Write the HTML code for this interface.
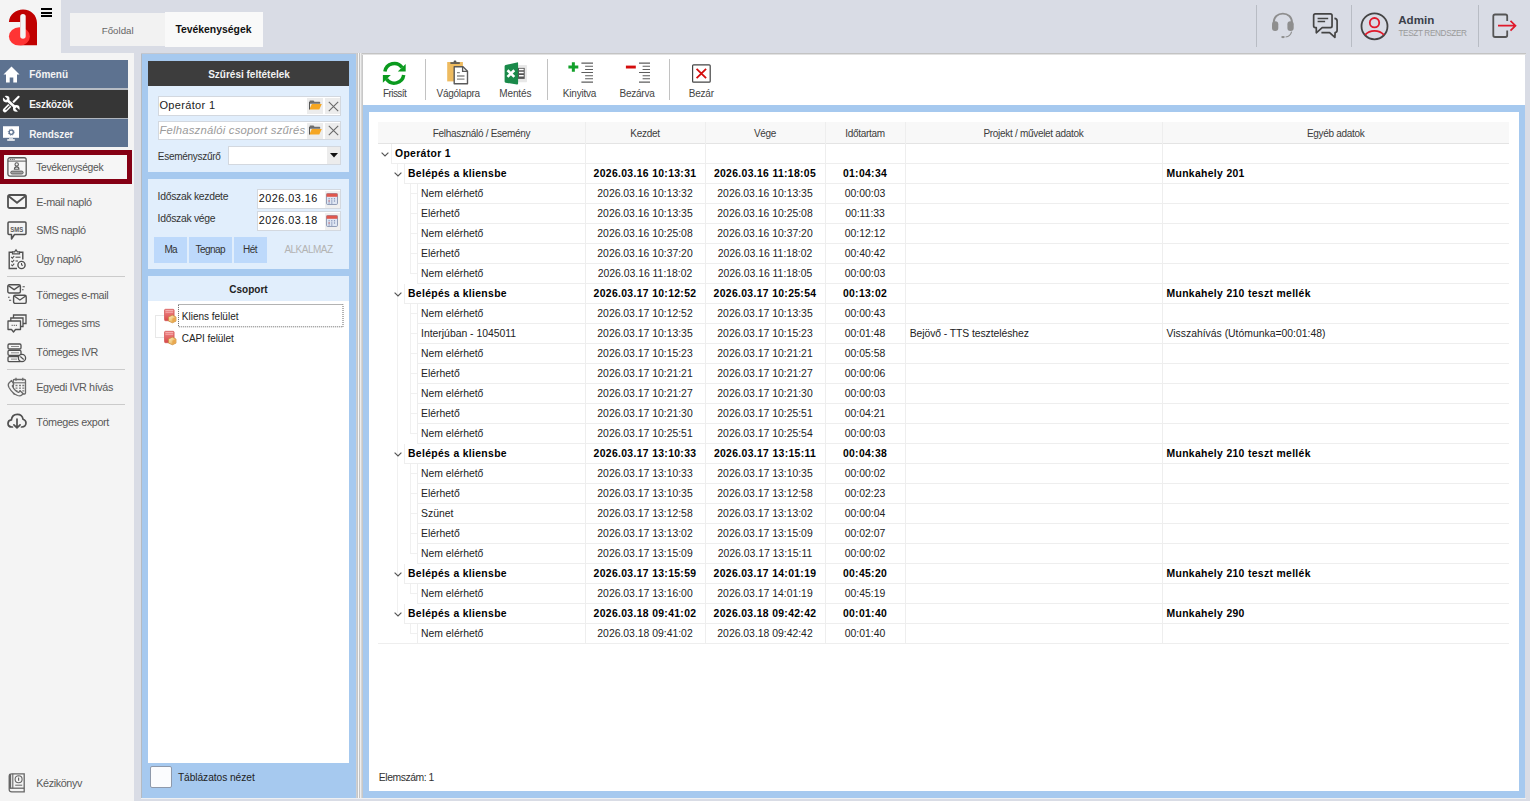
<!DOCTYPE html>
<html><head><meta charset="utf-8">
<style>
*{margin:0;padding:0;box-sizing:border-box}
html,body{width:1530px;height:801px;overflow:hidden}
body{position:relative;background:#d9dce5;font-family:"Liberation Sans",sans-serif;color:#222}
.a{position:absolute}
.t{position:absolute;white-space:nowrap;line-height:1}
svg.a{overflow:visible}
</style></head><body>
<div class="a" style="left:0px;top:0px;width:61px;height:53px;background:#f4f4f4;"></div>
<div class="a" style="left:0px;top:53px;width:134px;height:748px;background:#f4f4f4;"></div>
<div class="a" style="left:70px;top:13px;width:95px;height:33px;background:#f2f2f2;"></div>
<div class="a" style="left:165px;top:12px;width:98px;height:35px;background:#f9f9f9;"></div>
<div class="t" style="left:101.8px;top:26.00px;font-size:9.7px;color:#666;">Főoldal</div>
<div class="t" style="left:175.4px;top:25.00px;font-size:10.4px;font-weight:bold;color:#111;">Tevékenységek</div>
<svg class="a" style="left:0px;top:0px" width="60" height="53" viewBox="0 0 60 53">
<path d="M8.9 22 C9.5 14.5 15.8 9.6 23 9.6 C31 9.6 37 15.5 37 23 L37 45.3 L20.2 45.3 L20.2 22 Z" fill="#c00000"/>
<ellipse cx="19.4" cy="36.4" rx="10.5" ry="9.2" fill="#ff3434"/>
<rect x="20.2" y="14" width="5.5" height="24.8" rx="2.75" fill="#f4f4f4"/>
</svg>
<div class="a" style="left:41px;top:8.4px;width:11px;height:1.9px;background:#000;"></div>
<div class="a" style="left:41px;top:11.8px;width:11px;height:1.9px;background:#000;"></div>
<div class="a" style="left:41px;top:15.1px;width:11px;height:1.9px;background:#000;"></div>
<div class="a" style="left:0px;top:60px;width:128px;height:28px;background:#5d7290;"></div>
<div class="a" style="left:0px;top:88px;width:128px;height:2px;background:#b6bcc4;"></div>
<div class="a" style="left:0px;top:90px;width:128px;height:28px;background:#363636;"></div>
<div class="a" style="left:0px;top:118px;width:128px;height:1px;background:#b0b6be;"></div>
<div class="a" style="left:0px;top:119px;width:128px;height:28px;background:#5d7290;"></div>
<div class="t" style="left:29.2px;top:70.00px;font-size:10px;font-weight:bold;color:#f4f4f4;">Főmenü</div>
<div class="t" style="left:29.2px;top:100.00px;font-size:10px;font-weight:bold;letter-spacing:-0.25px;color:#f4f4f4;">Eszközök</div>
<div class="t" style="left:29.2px;top:130.00px;font-size:10px;font-weight:bold;letter-spacing:-0.1px;color:#f4f4f4;">Rendszer</div>
<svg class="a" style="left:3px;top:66px" width="17" height="17" viewBox="0 0 17 17"><path d="M8.5 0.5 L16.5 8.5 L14 8.5 L14 16.5 L10.3 16.5 L10.3 11.5 L6.7 11.5 L6.7 16.5 L3 16.5 L3 8.5 L0.5 8.5 Z" fill="#fff"/></svg>
<svg class="a" style="left:0px;top:92px" width="24" height="24" viewBox="0 0 24 24">
<path d="M18.6 4.8 L13.2 10.2" stroke="#fff" stroke-width="2.1" stroke-linecap="round"/>
<path d="M10.4 12.8 L4.9 18.3" stroke="#fff" stroke-width="4.2" stroke-linecap="round"/>
<path d="M9.4 13.8 L5.9 17.3" stroke="#363636" stroke-width="1.1" stroke-linecap="round"/>
<path d="M6.3 7.2 L16.2 16.3" stroke="#363636" stroke-width="4.4"/>
<path d="M6.3 7.2 L16.2 16.3" stroke="#fff" stroke-width="2.6"/>
<circle cx="6.2" cy="7.1" r="3.3" fill="#fff"/>
<circle cx="16.3" cy="16.4" r="3.3" fill="#fff"/>
<path d="M6.6 7.5 L2.8 3.7" stroke="#363636" stroke-width="2.1"/>
<path d="M15.9 16 L19.7 19.8" stroke="#363636" stroke-width="2.1"/>
</svg>
<svg class="a" style="left:3px;top:126px" width="17" height="16" viewBox="0 0 17 16">
<rect x="0" y="0.25" width="16" height="11.55" fill="#fff"/>
<rect x="6" y="11.8" width="4" height="1.5" fill="#c9d1dc"/>
<rect x="4" y="13.2" width="8" height="1.6" rx="0.8" fill="#fff"/>
<circle cx="8.25" cy="6.2" r="2.1" fill="none" stroke="#5d7290" stroke-width="1.3"/>
<circle cx="8.25" cy="6.2" r="3" fill="none" stroke="#5d7290" stroke-width="0.9" stroke-dasharray="1.1 1.25"/>
</svg>
<div class="a" style="left:0px;top:150px;width:132px;height:34px;background:#850014;"></div>
<div class="a" style="left:4px;top:155px;width:123px;height:24px;background:#f6f6f6;"></div>
<svg class="a" style="left:7px;top:156.5px" width="20" height="20" viewBox="0 0 20 20">
<rect x="0.9" y="0.75" width="18.3" height="18.3" rx="2" fill="none" stroke="#5a5a5a" stroke-width="1.3"/>
<path d="M0.9 4.1 L19.2 4.1" stroke="#5a5a5a" stroke-width="1"/>
<circle cx="3.3" cy="2.4" r="0.55" fill="#555"/><circle cx="5.2" cy="2.4" r="0.55" fill="#555"/><circle cx="7.1" cy="2.4" r="0.55" fill="#555"/>
<circle cx="9.7" cy="7.4" r="1.7" fill="none" stroke="#5a5a5a" stroke-width="1.1"/>
<path d="M7.4 12.2 C7.5 10.5 8.4 9.9 9.7 9.9 C11 9.9 11.9 10.5 12 12.2 Z" fill="none" stroke="#5a5a5a" stroke-width="1.1"/>
<rect x="3.7" y="14.1" width="12.5" height="2.9" rx="1.4" fill="#a0a0a0" stroke="#5a5a5a" stroke-width="0.9"/>
</svg>
<div class="t" style="left:36.2px;top:163.00px;font-size:10.3px;letter-spacing:-0.3px;color:#555;">Tevékenységek</div>
<div class="t" style="left:36.2px;top:197.00px;font-size:10.8px;letter-spacing:-0.38px;color:#595959;">E-mail napló</div>
<div class="t" style="left:36.2px;top:225.00px;font-size:10.8px;letter-spacing:-0.38px;color:#595959;">SMS napló</div>
<div class="t" style="left:36.2px;top:254.00px;font-size:10.8px;letter-spacing:-0.38px;color:#595959;">Ügy napló</div>
<div class="t" style="left:36.2px;top:290.00px;font-size:10.8px;letter-spacing:-0.38px;color:#595959;">Tömeges e-mail</div>
<div class="t" style="left:36.2px;top:318.00px;font-size:10.8px;letter-spacing:-0.38px;color:#595959;">Tömeges sms</div>
<div class="t" style="left:36.2px;top:347.00px;font-size:10.8px;letter-spacing:-0.38px;color:#595959;">Tömeges IVR</div>
<div class="t" style="left:36.2px;top:382.00px;font-size:10.8px;letter-spacing:-0.38px;color:#595959;">Egyedi IVR hívás</div>
<div class="t" style="left:36.2px;top:417.00px;font-size:10.8px;letter-spacing:-0.38px;color:#595959;">Tömeges export</div>
<div class="t" style="left:36.2px;top:778.00px;font-size:10.8px;letter-spacing:-0.38px;color:#595959;">Kézikönyv</div>
<div class="a" style="left:6.5px;top:275.6px;width:118px;height:1.3px;background:#cbcbcb;"></div>
<div class="a" style="left:6.5px;top:368.6px;width:118px;height:1.3px;background:#cbcbcb;"></div>
<div class="a" style="left:6.5px;top:404px;width:118px;height:1.3px;background:#cbcbcb;"></div>
<svg class="a" style="left:7px;top:194px" width="20" height="15" viewBox="0 0 20 15"><rect x="1" y="1" width="18" height="13" rx="1.6" fill="none" stroke="#505050" stroke-width="1.8"/><path d="M1.5 2 L10 8.8 L18.5 2" fill="none" stroke="#505050" stroke-width="1.8"/></svg>
<svg class="a" style="left:7px;top:220.5px" width="20" height="20" viewBox="0 0 20 20"><path d="M2 1 L18 1 Q19 1 19 2 L19 12.5 Q19 13.5 18 13.5 L7.5 13.5 L4.5 18 L4.5 13.5 L2 13.5 Q1 13.5 1 12.5 L1 2 Q1 1 2 1 Z" fill="none" stroke="#505050" stroke-width="1.5" stroke-linejoin="round"/><text x="3.2" y="10.5" font-family="Liberation Sans" font-weight="bold" font-size="7.3" textLength="13" lengthAdjust="spacingAndGlyphs" fill="#5a5a5a">SMS</text></svg>
<svg class="a" style="left:8px;top:249px" width="18" height="21" viewBox="0 0 18 21"><path d="M4.5 3.2 L1.2 3.2 L1.2 19.5 L9 19.5" fill="none" stroke="#505050" stroke-width="1.4"/>
<path d="M11.5 3.2 L14.8 3.2 L14.8 10.5" fill="none" stroke="#505050" stroke-width="1.4"/>
<path d="M4.5 4.8 L4.5 2.8 L6.6 2.8 L8 0.8 L9.4 2.8 L11.5 2.8 L11.5 4.8 Z" fill="none" stroke="#505050" stroke-width="1.2"/>
<path d="M3.2 8 L4.4 9.2 L6.2 7" fill="none" stroke="#505050" stroke-width="1.1"/><path d="M7.5 8.2 L12.5 8.2" stroke="#505050" stroke-width="1.1"/>
<path d="M3.2 11.8 L4.4 13 L6.2 10.8" fill="none" stroke="#505050" stroke-width="1.1"/><path d="M7.5 12 L10 12" stroke="#505050" stroke-width="1.1"/>
<path d="M3.2 15.6 L4.4 16.8 L6.2 14.6" fill="none" stroke="#505050" stroke-width="1.1"/>
<circle cx="13.5" cy="16" r="3.6" fill="#f4f4f4" stroke="#505050" stroke-width="1.4"/><path d="M13.5 14 L13.5 16.2 L15 16.2" fill="none" stroke="#505050" stroke-width="1"/></svg>
<svg class="a" style="left:7px;top:284px" width="20" height="20" viewBox="0 0 20 20"><rect x="0.8" y="0.8" width="12.6" height="8.2" rx="1.5" fill="none" stroke="#505050" stroke-width="1.4"/><path d="M1.3 1.6 L7.1 5.6 L12.9 1.6" fill="none" stroke="#505050" stroke-width="1.3"/>
<rect x="6.6" y="11.2" width="12.6" height="8.2" rx="1.5" fill="none" stroke="#505050" stroke-width="1.4"/><path d="M7.1 12 L12.9 16 L18.7 12" fill="none" stroke="#505050" stroke-width="1.3"/>
<path d="M15.6 2.8 L17.8 2.8 M15 5.8 L16.6 5.8 M1 13.2 L2.6 13.2 M2 16.2 L4.2 16.2" stroke="#505050" stroke-width="1.1"/></svg>
<svg class="a" style="left:7px;top:313.5px" width="20" height="20" viewBox="0 0 20 20"><path d="M6.5 4 L6.5 1 L19 1 L19 9.5 L16 9.5" fill="none" stroke="#505050" stroke-width="1.3"/>
<path d="M3.8 7 L3.8 4 L16 4 L16 12.5 L13.5 12.5" fill="#f4f4f4" stroke="#505050" stroke-width="1.3"/>
<path d="M1 7 L13.5 7 L13.5 15.5 L8.5 15.5 L6.5 18 L4.5 15.5 L1 15.5 Z" fill="#f4f4f4" stroke="#505050" stroke-width="1.3" stroke-linejoin="round"/>
<path d="M4.6 11.3 L5.8 11.3 M6.7 11.3 L7.9 11.3 M8.8 11.3 L10 11.3" stroke="#505050" stroke-width="1"/></svg>
<svg class="a" style="left:7px;top:342.5px" width="20" height="20" viewBox="0 0 20 20"><rect x="1" y="1" width="13" height="5" rx="1.2" fill="none" stroke="#505050" stroke-width="1.3"/>
<rect x="1" y="7.3" width="13" height="5" rx="1.2" fill="none" stroke="#505050" stroke-width="1.3"/>
<rect x="1" y="13.6" width="13" height="5" rx="1.2" fill="none" stroke="#505050" stroke-width="1.3"/>
<path d="M4 3.5 L12 3.5 M4 9.8 L12 9.8 M4 16.1 L10 16.1" stroke="#8a8a8a" stroke-width="1"/>
<circle cx="15" cy="15" r="3.6" fill="#f4f4f4" stroke="#505050" stroke-width="1.3"/><path d="M13.3 13.5 L16.7 16.5" stroke="#505050" stroke-width="1.2"/></svg>
<svg class="a" style="left:7px;top:376.5px" width="20" height="20" viewBox="0 0 20 20"><rect x="6.3" y="2.5" width="12.2" height="14.5" rx="1" fill="#f4f4f4" stroke="#6a6a6a" stroke-width="1.3"/>
<path d="M6.3 5.8 L18.5 5.8" stroke="#6a6a6a" stroke-width="1.1"/>
<path d="M9 0.8 L9 3.8 M15.8 0.8 L15.8 3.8" stroke="#6a6a6a" stroke-width="1.3"/>
<path d="M8.5 8.5 h2 M12 8.5 h2 M15.3 8.5 h2 M8.5 11.2 h2 M12 11.2 h2 M15.3 11.2 h2 M8.5 13.9 h2 M12 13.9 h2 M15.3 13.9 h2" stroke="#7a7a7a" stroke-width="1.3"/>
<path d="M4.5 3.5 L2 6 C1 7 1 8.5 2 10.5 C4 14 7 17 10.5 18.5 C12.5 19.3 13.8 19 14.8 18 L16 16.5 L13.3 14 L11.5 15.4 C9 14.4 6.5 11.5 5.3 9 L6.8 7.2 Z" fill="#f4f4f4" stroke="#6a6a6a" stroke-width="1.3" stroke-linejoin="round"/></svg>
<svg class="a" style="left:7px;top:411px" width="20" height="19" viewBox="0 0 20 19"><path d="M5.5 16 L4.8 16 C2.5 16 1 14.4 1 12.4 C1 10.4 2.5 9 4.4 8.8 C4.8 5.6 7.2 3.3 10.3 3.3 C13.4 3.3 15.6 5.4 16 8.2 C17.8 8.7 19 10.2 19 12.1 C19 14.3 17.3 16 15 16 L14.5 16" fill="none" stroke="#505050" stroke-width="1.7" stroke-linecap="round"/>
<path d="M10 8 L10 16.8 M6.9 13.8 L10 16.8 L13.1 13.8" fill="none" stroke="#505050" stroke-width="1.7" stroke-linecap="round" stroke-linejoin="round"/></svg>
<svg class="a" style="left:8px;top:772.5px" width="18" height="20" viewBox="0 0 18 20"><path d="M2.5 15.5 L2.5 2 Q2.5 0.8 3.7 0.8 L16.2 0.8 L16.2 18.8 L3.8 18.8 Q1.2 18.8 1.2 16.6 L1.2 3 Q1.2 1.2 2.5 0.9" fill="none" stroke="#666" stroke-width="1.3"/>
<path d="M1.5 15.2 L16.2 15.2" stroke="#666" stroke-width="1.3"/>
<path d="M4.8 0.8 L4.8 15.2" stroke="#666" stroke-width="1.1"/>
<circle cx="10.6" cy="6.2" r="3.5" fill="none" stroke="#666" stroke-width="1.1"/>
<path d="M10.6 4.8 L10.6 7.8" stroke="#666" stroke-width="1.2"/><circle cx="10.6" cy="4" r="0.4" fill="#666"/>
<path d="M7.2 12.2 L14.2 12.2" stroke="#666" stroke-width="1"/></svg>
<div class="a" style="left:1256px;top:5px;width:1px;height:42px;background:#b8bcc4;"></div>
<div class="a" style="left:1351px;top:5px;width:1px;height:42px;background:#b8bcc4;"></div>
<div class="a" style="left:1478px;top:5px;width:1px;height:42px;background:#b8bcc4;"></div>
<svg class="a" style="left:1271px;top:12px" width="24" height="27" viewBox="0 0 24 27"><path d="M2.7 10.5 C2.7 5 6.7 1.6 11.85 1.6 C17 1.6 21 5 21 10.5" fill="none" stroke="#8e8e8e" stroke-width="1.8"/>
<rect x="1" y="9.3" width="6.3" height="9.7" rx="3" fill="#8e8e8e"/><rect x="16.4" y="9.3" width="6.3" height="9.7" rx="3" fill="#8e8e8e"/>
<path d="M20.6 19.6 C19.9 22.6 18 24.6 14.6 25" fill="none" stroke="#8e8e8e" stroke-width="1.1"/><ellipse cx="12" cy="25.1" rx="1.8" ry="1.05" fill="#8e8e8e"/></svg>
<svg class="a" style="left:1312px;top:12px" width="27" height="28" viewBox="0 0 27 28"><path d="M3.3 1.85 L18.4 1.85 Q20.05 1.85 20.05 3.5 L20.05 13.9 Q20.05 15.55 18.4 15.55 L10.2 15.55 L4.3 20.8 L4.3 15.55 L3.3 15.55 Q1.65 15.55 1.65 13.9 L1.65 3.5 Q1.65 1.85 3.3 1.85 Z" fill="none" stroke="#444" stroke-width="1.7" stroke-linejoin="round"/>
<path d="M5.6 6.6 L16.2 6.6 M5.6 9.6 L13.1 9.6" stroke="#444" stroke-width="1.5"/>
<path d="M22.4 6.4 Q25.1 6.6 25.1 9 L25.1 18.3 Q25.1 20.3 23.1 20.6 L22.9 25.4 L17.6 20.6 L9.4 20.6" fill="none" stroke="#444" stroke-width="1.7" stroke-linejoin="round"/></svg>
<svg class="a" style="left:1360px;top:11.5px" width="29" height="29" viewBox="0 0 29 29"><circle cx="14.5" cy="14.3" r="13" fill="none" stroke="#444" stroke-width="1.8"/>
<circle cx="14.5" cy="10.7" r="4.7" fill="none" stroke="#e0192a" stroke-width="1.8"/>
<path d="M5.1 22.9 C7.8 19.9 11 18.9 14.5 18.9 C18 18.9 21.2 19.9 23.9 22.9" fill="none" stroke="#e0192a" stroke-width="1.8"/></svg>
<div class="t" style="left:1398.2px;top:14.00px;font-size:11.6px;font-weight:bold;color:#3b3f4a;">Admin</div>
<div class="t" style="left:1398.4px;top:30.00px;font-size:8.2px;letter-spacing:-0.35px;color:#9a9a9a;">TESZT RENDSZER</div>
<svg class="a" style="left:1491px;top:13px" width="27" height="26" viewBox="0 0 27 26"><path d="M16.2 8 L16.2 3.2 Q16.2 1.5 14.5 1.5 L4 1.5 Q2.3 1.5 2.3 3.2 L2.3 22.3 Q2.3 24 4 24 L14.5 24 Q16.2 24 16.2 22.3 L16.2 17.5" fill="none" stroke="#555" stroke-width="1.8"/>
<path d="M7 12.7 L24.5 12.7 M19.5 7.8 L24.5 12.7 L19.5 17.6" fill="none" stroke="#e0192a" stroke-width="1.7"/></svg>
<div class="a" style="left:141px;top:53px;width:215px;height:745px;background:#a6c9ef;"></div>
<div class="a" style="left:141px;top:53px;width:1px;height:745px;background:#b4bac2;"></div>
<div class="a" style="left:141px;top:53px;width:215px;height:1px;background:#c3c7cf;"></div>
<div class="a" style="left:148px;top:61px;width:201px;height:25px;background:#3d3d3d;"></div>
<div class="t" style="left:208.2px;top:70.00px;font-size:10px;font-weight:bold;color:#f2f2f2;">Szűrési feltételek</div>
<div class="a" style="left:148px;top:86px;width:201px;height:86px;background:#e1eefc;"></div>
<div class="a" style="left:157.5px;top:96.3px;width:183px;height:19.3px;background:#fff;border:1px solid #d3d8df"></div>
<div class="a" style="left:307px;top:98px;width:16px;height:16px;background:#ececec;"></div>
<div class="a" style="left:325px;top:98px;width:15px;height:16px;background:#ececec;"></div>
<div class="t" style="left:159.4px;top:100.00px;font-size:11px;letter-spacing:0.35px;color:#222;">Operátor 1</div>
<div class="a" style="left:157.5px;top:120.9px;width:183px;height:19.6px;background:#fff;border:1px solid #d3d8df"></div>
<div class="a" style="left:307px;top:122.8px;width:16px;height:16px;background:#ececec;"></div>
<div class="a" style="left:325px;top:122.8px;width:15px;height:16px;background:#ececec;"></div>
<div class="t" style="left:159.4px;top:125.00px;font-size:11.3px;font-style:italic;letter-spacing:0.22px;color:#9b9b9b;">Felhasználói csoport szűrés</div>
<svg class="a" style="left:309px;top:100.3px" width="13" height="10" viewBox="0 0 13 10"><path d="M0.5 1.2 Q0.5 0.5 1.2 0.5 L4.5 0.5 L5.5 1.8 L10.5 1.8 Q11.2 1.8 11.2 2.5 L11.2 3.8 L0.5 3.8 Z" fill="#6e6e6e"/>
<path d="M0.5 3 L0.5 9.5 L10.3 9.5 L12.8 4 L2.8 4 L0.8 8.6" fill="#f5a623"/>
<path d="M0.5 2 L0.5 9.5" stroke="#555" stroke-width="1"/></svg>
<svg class="a" style="left:327.5px;top:100.5px" width="11" height="11" viewBox="0 0 11 11"><path d="M0.8 0.8 L10.2 10.2 M10.2 0.8 L0.8 10.2" stroke="#6a6a6a" stroke-width="1.1"/></svg>
<svg class="a" style="left:309px;top:124.8px" width="13" height="10" viewBox="0 0 13 10"><path d="M0.5 1.2 Q0.5 0.5 1.2 0.5 L4.5 0.5 L5.5 1.8 L10.5 1.8 Q11.2 1.8 11.2 2.5 L11.2 3.8 L0.5 3.8 Z" fill="#6e6e6e"/>
<path d="M0.5 3 L0.5 9.5 L10.3 9.5 L12.8 4 L2.8 4 L0.8 8.6" fill="#f5a623"/>
<path d="M0.5 2 L0.5 9.5" stroke="#555" stroke-width="1"/></svg>
<svg class="a" style="left:327.5px;top:125px" width="11" height="11" viewBox="0 0 11 11"><path d="M0.8 0.8 L10.2 10.2 M10.2 0.8 L0.8 10.2" stroke="#6a6a6a" stroke-width="1.1"/></svg>
<div class="t" style="left:157.8px;top:152.00px;font-size:10px;letter-spacing:-0.28px;color:#333;">Eseményszűrő</div>
<div class="a" style="left:228.2px;top:145.7px;width:112.4px;height:19.6px;background:#fff;border:1px solid #d3d8df"></div>
<div class="a" style="left:327px;top:147px;width:13px;height:17px;background:#ececec;"></div>
<svg class="a" style="left:329.5px;top:153px" width="8" height="5" viewBox="0 0 8 5"><path d="M0 0 L8 0 L4 4.6 Z" fill="#111"/></svg>
<div class="a" style="left:148px;top:179px;width:201px;height:90px;background:#e1eefc;"></div>
<div class="t" style="left:157.6px;top:192.00px;font-size:10.4px;letter-spacing:-0.3px;color:#333;">Időszak kezdete</div>
<div class="t" style="left:157.6px;top:214.00px;font-size:10.4px;letter-spacing:-0.3px;color:#333;">Időszak vége</div>
<div class="a" style="left:256.8px;top:189.4px;width:83.8px;height:19.6px;background:#fff;border:1px solid #d3d8df"></div>
<div class="a" style="left:256.8px;top:211.4px;width:83.8px;height:19.4px;background:#fff;border:1px solid #d3d8df"></div>
<div class="a" style="left:325.2px;top:190.5px;width:14.5px;height:17.5px;background:#f0f0f0;"></div>
<div class="a" style="left:325.2px;top:212.5px;width:14.5px;height:17.2px;background:#f0f0f0;"></div>
<div class="t" style="left:258.8px;top:193.00px;font-size:10.8px;letter-spacing:0.5px;color:#111;">2026.03.16</div>
<div class="t" style="left:258.8px;top:215.00px;font-size:10.8px;letter-spacing:0.5px;color:#111;">2026.03.18</div>
<svg class="a" style="left:325.8px;top:193px" width="12" height="12" viewBox="0 0 12 12"><rect x="0.5" y="0.5" width="11" height="11" rx="1.2" fill="#dfe6f3" stroke="#7b8aa8" stroke-width="0.8"/>
<rect x="0.5" y="0.5" width="11" height="3.3" fill="#e0574c"/>
<path d="M2.5 5.8 h1.2 M5.2 5.8 h1.2 M7.9 5.8 h1.2 M2.5 8 h1.2 M5.2 8 h1.2 M7.9 8 h1.2 M2.5 10 h1.2 M5.2 10 h1.2" stroke="#6b7fa8" stroke-width="1"/>
<path d="M2.5 8 h1.2" stroke="#e0574c" stroke-width="1"/></svg>
<svg class="a" style="left:325.8px;top:215px" width="12" height="12" viewBox="0 0 12 12"><rect x="0.5" y="0.5" width="11" height="11" rx="1.2" fill="#dfe6f3" stroke="#7b8aa8" stroke-width="0.8"/>
<rect x="0.5" y="0.5" width="11" height="3.3" fill="#e0574c"/>
<path d="M2.5 5.8 h1.2 M5.2 5.8 h1.2 M7.9 5.8 h1.2 M2.5 8 h1.2 M5.2 8 h1.2 M7.9 8 h1.2 M2.5 10 h1.2 M5.2 10 h1.2" stroke="#6b7fa8" stroke-width="1"/>
<path d="M2.5 8 h1.2" stroke="#e0574c" stroke-width="1"/></svg>
<div class="a" style="left:154.3px;top:236.6px;width:32.7px;height:26px;background:#bdd9fb;"></div>
<div class="a" style="left:189px;top:236.6px;width:43px;height:26px;background:#bdd9fb;"></div>
<div class="a" style="left:233.7px;top:236.6px;width:33.3px;height:26px;background:#bdd9fb;"></div>
<div class="t" style="left:150.60px;width:40px;text-align:center;top:245.00px;font-size:10px;letter-spacing:-0.8px;color:#333;">Ma</div>
<div class="t" style="left:185.30px;width:50px;text-align:center;top:245.00px;font-size:10px;letter-spacing:-0.55px;color:#333;">Tegnap</div>
<div class="t" style="left:230.00px;width:40px;text-align:center;top:245.00px;font-size:10px;letter-spacing:-0.5px;color:#333;">Hét</div>
<div class="t" style="left:273.50px;width:70px;text-align:center;top:245.00px;font-size:10px;letter-spacing:-0.5px;color:#b3b3b3;">ALKALMAZ</div>
<div class="a" style="left:148px;top:276px;width:201px;height:25.4px;background:#e1eefc;"></div>
<div class="a" style="left:148px;top:301.4px;width:201px;height:461.3px;background:#fff;"></div>
<div class="t" style="left:208.50px;width:80px;text-align:center;top:285.00px;font-size:10px;font-weight:bold;color:#222;">Csoport</div>
<svg class="a" style="left:178px;top:304px" width="166" height="24" viewBox="0 0 166 24"><rect x="0.5" y="0.5" width="164.5" height="22.3" fill="none" stroke="#666" stroke-width="1" stroke-dasharray="1 1"/></svg>
<div class="a" style="left:155px;top:315px;width:1px;height:22.5px;background:#e8e8e8;"></div>
<div class="a" style="left:155px;top:315px;width:9px;height:1px;background:#e8e8e8;"></div>
<div class="a" style="left:155px;top:337px;width:9px;height:1px;background:#e8e8e8;"></div>
<svg class="a" style="left:164.2px;top:308.8px" width="13" height="14" viewBox="0 0 13 14"><defs><linearGradient id="rg" x1="0" y1="0" x2="0" y2="1"><stop offset="0" stop-color="#f08a8a"/><stop offset="1" stop-color="#d84848"/></linearGradient>
<linearGradient id="cg" x1="0" y1="0" x2="1" y2="1"><stop offset="0" stop-color="#fff4c8"/><stop offset="1" stop-color="#e09a30"/></linearGradient></defs>
<rect x="0.5" y="0.3" width="9.6" height="11.4" rx="1" fill="url(#rg)" stroke="#d05050" stroke-width="0.7"/>
<path d="M1.5 1.5 h7.6 M1.5 3.3 h7.6" stroke="#f8c0c0" stroke-width="0.7"/>
<path d="M4.6 8 L8.4 6.2 L12 8 L12 12.1 L8.4 13.8 L4.6 12.1 Z" fill="url(#cg)" stroke="#c88a38" stroke-width="0.7"/>
<path d="M8.4 9.8 L12 8 L12 12.1 L8.4 13.8 Z" fill="#e8a850"/></svg>
<svg class="a" style="left:164.2px;top:331.4px" width="13" height="14" viewBox="0 0 13 14"><defs><linearGradient id="rg" x1="0" y1="0" x2="0" y2="1"><stop offset="0" stop-color="#f08a8a"/><stop offset="1" stop-color="#d84848"/></linearGradient>
<linearGradient id="cg" x1="0" y1="0" x2="1" y2="1"><stop offset="0" stop-color="#fff4c8"/><stop offset="1" stop-color="#e09a30"/></linearGradient></defs>
<rect x="0.5" y="0.3" width="9.6" height="11.4" rx="1" fill="url(#rg)" stroke="#d05050" stroke-width="0.7"/>
<path d="M1.5 1.5 h7.6 M1.5 3.3 h7.6" stroke="#f8c0c0" stroke-width="0.7"/>
<path d="M4.6 8 L8.4 6.2 L12 8 L12 12.1 L8.4 13.8 L4.6 12.1 Z" fill="url(#cg)" stroke="#c88a38" stroke-width="0.7"/>
<path d="M8.4 9.8 L12 8 L12 12.1 L8.4 13.8 Z" fill="#e8a850"/></svg>
<div class="t" style="left:181.8px;top:312.00px;font-size:10px;color:#222;">Kliens felület</div>
<div class="t" style="left:181.8px;top:334.00px;font-size:10px;letter-spacing:-0.08px;color:#222;">CAPI felület</div>
<div class="a" style="left:149.6px;top:766.3px;width:22px;height:21.7px;background:#fbfcfe;border:1px solid #8e99ab;border-radius:2px"></div>
<div class="t" style="left:177.9px;top:773.00px;font-size:10.2px;letter-spacing:-0.05px;color:#222;">Táblázatos nézet</div>
<div class="a" style="left:356px;top:53px;width:1px;height:745px;background:#d0d0d0;"></div>
<div class="a" style="left:357px;top:53px;width:1px;height:745px;background:#c6c6c6;"></div>
<div class="a" style="left:358px;top:53px;width:1px;height:745px;background:#f8f8f8;"></div>
<div class="a" style="left:359px;top:53px;width:1px;height:745px;background:#c4c4c4;"></div>
<div class="a" style="left:360px;top:53px;width:1px;height:745px;background:#eeeeee;"></div>
<div class="a" style="left:361px;top:53px;width:1px;height:745px;background:#d6d6d6;"></div>
<div class="a" style="left:362px;top:53px;width:1px;height:745px;background:#c8c8c8;"></div>
<div class="a" style="left:363px;top:53px;width:1162px;height:745px;background:#fff;"></div>
<div class="a" style="left:362px;top:53px;width:1164px;height:1px;background:#c3c3c3;"></div>
<div class="a" style="left:362px;top:54px;width:1164px;height:1px;background:#e2e2e2;"></div>
<div class="a" style="left:363px;top:105px;width:1162px;height:693px;background:#a6c9ef;"></div>
<div class="a" style="left:369px;top:112px;width:1150px;height:679px;background:#fff;"></div>
<div class="a" style="left:141px;top:798px;width:1385px;height:1px;background:#eef0f3;"></div>
<div class="a" style="left:425px;top:59px;width:1px;height:41px;background:#c2c2c2;"></div>
<div class="a" style="left:547px;top:59px;width:1px;height:41px;background:#c2c2c2;"></div>
<div class="a" style="left:669px;top:59px;width:1px;height:41px;background:#c2c2c2;"></div>
<div class="t" style="left:364.60px;width:60px;text-align:center;top:89.00px;font-size:10px;letter-spacing:-0.6px;color:#444;">Frissít</div>
<div class="t" style="left:418.20px;width:80px;text-align:center;top:89.00px;font-size:10px;letter-spacing:-0.25px;color:#444;">Vágólapra</div>
<div class="t" style="left:485.30px;width:60px;text-align:center;top:89.00px;font-size:10px;letter-spacing:-0.1px;color:#444;">Mentés</div>
<div class="t" style="left:549.50px;width:60px;text-align:center;top:89.00px;font-size:10px;letter-spacing:-0.2px;color:#444;">Kinyitva</div>
<div class="t" style="left:607.00px;width:60px;text-align:center;top:89.00px;font-size:10px;letter-spacing:-0.25px;color:#444;">Bezárva</div>
<div class="t" style="left:671.30px;width:60px;text-align:center;top:89.00px;font-size:10px;letter-spacing:-0.2px;color:#444;">Bezár</div>
<svg class="a" style="left:378px;top:58px" width="32" height="32" viewBox="0 0 32 32"><path d="M6.9 13.6 A9.5 9.5 0 0 1 24.1 9.55" fill="none" stroke="#0a9a1e" stroke-width="3.5"/>
<path d="M27.7 6 L27.7 13.6 L19.8 13.6 Z" fill="#0a9a1e"/>
<path d="M25.7 17 A9.5 9.5 0 0 1 8.5 21.05" fill="none" stroke="#0a9a1e" stroke-width="3.5"/>
<path d="M4.9 24.8 L4.9 17 L12.8 17 Z" fill="#0a9a1e"/></svg>
<svg class="a" style="left:440px;top:56px" width="96" height="32" viewBox="0 0 96 32"><rect x="7.2" y="6" width="15.7" height="19.4" fill="#eebb60"/>
<rect x="10.4" y="6.2" width="9.4" height="1.7" fill="#555"/>
<rect x="13.6" y="4.6" width="2.8" height="2" rx="1" fill="#555"/>
<path d="M14.2 10.7 L23 10.7 L27.5 15.2 L27.5 27.8 L14.2 27.8 Z" fill="#fff" stroke="#5a5a5a" stroke-width="1.4" stroke-linejoin="round"/>
<path d="M22.6 10.7 L22.6 15.3 L27.5 15.3" fill="none" stroke="#5a5a5a" stroke-width="1.3"/>
<path d="M17 16.7 h2.8 M17 20 h7.5 M17 23.2 h7.5" stroke="#8a8a8a" stroke-width="1.3"/>
<rect x="78" y="9" width="9" height="17.3" rx="0.8" fill="#e8e8e8"/>
<rect x="78" y="11.9" width="6.7" height="11" fill="#555"/>
<path d="M79 13.5 h4.7 M79 16.6 h4.7 M79 19.8 h4.7" stroke="#fff" stroke-width="1.5"/>
<path d="M65.6 9 Q64.6 9.2 64.6 10.2 L64.6 25.5 Q64.6 26.5 65.6 26.7 L77 28.5 Q78.1 28.6 78.1 27.5 L78.1 7.3 Q78.1 6.2 77 6.4 Z" fill="#1a8a4a"/>
<path d="M67.5 14.2 L74.3 20.9 M74.3 14.2 L67.5 20.9" stroke="#fff" stroke-width="2.6"/></svg>
<svg class="a" style="left:560px;top:56px" width="160" height="32" viewBox="0 0 160 32"><path d="M13.35 6.3 L13.35 15.7 M8.4 11 L18.3 11" stroke="#12a02a" stroke-width="3"/>
<path d="M21.4 7.1 L33 7.1 M25.1 10.2 L33 10.2 M25.1 13.4 L33 13.4 M21.4 16.5 L33 16.5 M25.1 19.7 L33 19.7 M25.1 22.8 L33 22.8 M21.4 26.1 L33 26.1 " stroke="#5e5e5e" stroke-width="1.05"/>
<path d="M65.9 11.05 L75.8 11.05" stroke="#d40c0c" stroke-width="2.9"/>
<path d="M79 7.1 L90 7.1 M82.6 10.2 L90 10.2 M82.6 13.4 L90 13.4 M79 16.5 L90 16.5 M82.6 19.7 L90 19.7 M82.6 22.8 L90 22.8 M79 26.1 L90 26.1 " stroke="#5e5e5e" stroke-width="1.05"/>
<rect x="132.6" y="8.8" width="17.6" height="17.4" rx="1" fill="#fff" stroke="#444" stroke-width="1.2"/>
<path d="M136.6 12.9 L146.1 22.2 M146.1 12.9 L136.6 22.2" stroke="#d40c0c" stroke-width="1.8"/></svg>
<div class="a" style="left:378px;top:122px;width:1131px;height:21px;background:#f8f8f8;"></div>
<div class="a" style="left:378px;top:143px;width:1131px;height:1px;background:#e4e4e4;"></div>
<div class="a" style="left:585px;top:122px;width:1px;height:521px;background:#eeeeee;"></div>
<div class="a" style="left:705px;top:122px;width:1px;height:521px;background:#eeeeee;"></div>
<div class="a" style="left:825px;top:122px;width:1px;height:521px;background:#eeeeee;"></div>
<div class="a" style="left:905px;top:122px;width:1px;height:521px;background:#eeeeee;"></div>
<div class="a" style="left:1162px;top:122px;width:1px;height:521px;background:#eeeeee;"></div>
<div class="t" style="left:378.00px;width:207px;text-align:center;top:129.00px;font-size:10px;letter-spacing:-0.3px;color:#3c3c3c;">Felhasználó / Esemény</div>
<div class="t" style="left:585.00px;width:120px;text-align:center;top:129.00px;font-size:10px;letter-spacing:-0.3px;color:#3c3c3c;">Kezdet</div>
<div class="t" style="left:705.00px;width:120px;text-align:center;top:129.00px;font-size:10px;letter-spacing:-0.3px;color:#3c3c3c;">Vége</div>
<div class="t" style="left:825.00px;width:80px;text-align:center;top:129.00px;font-size:10px;letter-spacing:-0.3px;color:#3c3c3c;">Időtartam</div>
<div class="t" style="left:905.00px;width:257px;text-align:center;top:129.00px;font-size:10px;letter-spacing:-0.3px;color:#3c3c3c;">Projekt / művelet adatok</div>
<div class="t" style="left:1162.00px;width:347.5px;text-align:center;top:129.00px;font-size:10px;letter-spacing:-0.3px;color:#3c3c3c;">Egyéb adatok</div>
<div class="a" style="left:397px;top:163px;width:1px;height:450px;background:#f0f0f0;"></div>
<div class="a" style="left:410px;top:183px;width:1px;height:90px;background:#f0f0f0;"></div>
<div class="a" style="left:410px;top:193px;width:7px;height:1px;background:#f0f0f0;"></div>
<div class="a" style="left:410px;top:213px;width:7px;height:1px;background:#f0f0f0;"></div>
<div class="a" style="left:410px;top:233px;width:7px;height:1px;background:#f0f0f0;"></div>
<div class="a" style="left:410px;top:253px;width:7px;height:1px;background:#f0f0f0;"></div>
<div class="a" style="left:410px;top:273px;width:7px;height:1px;background:#f0f0f0;"></div>
<div class="a" style="left:410px;top:303px;width:1px;height:130px;background:#f0f0f0;"></div>
<div class="a" style="left:410px;top:313px;width:7px;height:1px;background:#f0f0f0;"></div>
<div class="a" style="left:410px;top:333px;width:7px;height:1px;background:#f0f0f0;"></div>
<div class="a" style="left:410px;top:353px;width:7px;height:1px;background:#f0f0f0;"></div>
<div class="a" style="left:410px;top:373px;width:7px;height:1px;background:#f0f0f0;"></div>
<div class="a" style="left:410px;top:393px;width:7px;height:1px;background:#f0f0f0;"></div>
<div class="a" style="left:410px;top:413px;width:7px;height:1px;background:#f0f0f0;"></div>
<div class="a" style="left:410px;top:433px;width:7px;height:1px;background:#f0f0f0;"></div>
<div class="a" style="left:410px;top:463px;width:1px;height:90px;background:#f0f0f0;"></div>
<div class="a" style="left:410px;top:473px;width:7px;height:1px;background:#f0f0f0;"></div>
<div class="a" style="left:410px;top:493px;width:7px;height:1px;background:#f0f0f0;"></div>
<div class="a" style="left:410px;top:513px;width:7px;height:1px;background:#f0f0f0;"></div>
<div class="a" style="left:410px;top:533px;width:7px;height:1px;background:#f0f0f0;"></div>
<div class="a" style="left:410px;top:553px;width:7px;height:1px;background:#f0f0f0;"></div>
<div class="a" style="left:410px;top:583px;width:1px;height:10px;background:#f0f0f0;"></div>
<div class="a" style="left:410px;top:593px;width:7px;height:1px;background:#f0f0f0;"></div>
<div class="a" style="left:410px;top:623px;width:1px;height:10px;background:#f0f0f0;"></div>
<div class="a" style="left:410px;top:633px;width:7px;height:1px;background:#f0f0f0;"></div>
<div class="a" style="left:391px;top:163px;width:1118px;height:1px;background:#eeeeee;"></div>
<div class="a" style="left:391px;top:144px;width:1px;height:19px;background:#eeeeee;"></div>
<svg class="a" style="left:380.7px;top:151.5px" width="8" height="5" viewBox="0 0 8 5"><path d="M0.6 0.6 L4 3.9 L7.4 0.6" fill="none" stroke="#555" stroke-width="1.15"/></svg>
<div class="t" style="left:395px;top:149.00px;font-size:10.4px;font-weight:bold;letter-spacing:0.33px;color:#000;">Operátor 1</div>
<div class="a" style="left:404px;top:183px;width:1105px;height:1px;background:#eeeeee;"></div>
<div class="a" style="left:404px;top:164px;width:1px;height:19px;background:#eeeeee;"></div>
<svg class="a" style="left:393.7px;top:171.5px" width="8" height="5" viewBox="0 0 8 5"><path d="M0.6 0.6 L4 3.9 L7.4 0.6" fill="none" stroke="#555" stroke-width="1.15"/></svg>
<div class="t" style="left:408px;top:169.00px;font-size:10.4px;font-weight:bold;letter-spacing:0.33px;color:#000;">Belépés a kliensbe</div>
<div class="t" style="left:585.00px;width:120px;text-align:center;top:169.00px;font-size:10.4px;font-weight:bold;letter-spacing:0.33px;color:#000;">2026.03.16 10:13:31</div>
<div class="t" style="left:705.00px;width:120px;text-align:center;top:169.00px;font-size:10.4px;font-weight:bold;letter-spacing:0.33px;color:#000;">2026.03.16 11:18:05</div>
<div class="t" style="left:825.00px;width:80px;text-align:center;top:169.00px;font-size:10.4px;font-weight:bold;letter-spacing:0.33px;color:#000;">01:04:34</div>
<div class="t" style="left:1166.5px;top:169.00px;font-size:10.4px;font-weight:bold;letter-spacing:0.33px;color:#000;">Munkahely 201</div>
<div class="a" style="left:417px;top:203px;width:1092px;height:1px;background:#eeeeee;"></div>
<div class="a" style="left:417px;top:184px;width:1px;height:19px;background:#eeeeee;"></div>
<div class="t" style="left:421px;top:189.00px;font-size:10.4px;color:#222;">Nem elérhető</div>
<div class="t" style="left:585.00px;width:120px;text-align:center;top:189.00px;font-size:10.4px;color:#222;">2026.03.16 10:13:32</div>
<div class="t" style="left:705.00px;width:120px;text-align:center;top:189.00px;font-size:10.4px;color:#222;">2026.03.16 10:13:35</div>
<div class="t" style="left:825.00px;width:80px;text-align:center;top:189.00px;font-size:10.4px;color:#222;">00:00:03</div>
<div class="a" style="left:417px;top:223px;width:1092px;height:1px;background:#eeeeee;"></div>
<div class="a" style="left:417px;top:204px;width:1px;height:19px;background:#eeeeee;"></div>
<div class="t" style="left:421px;top:209.00px;font-size:10.4px;color:#222;">Elérhető</div>
<div class="t" style="left:585.00px;width:120px;text-align:center;top:209.00px;font-size:10.4px;color:#222;">2026.03.16 10:13:35</div>
<div class="t" style="left:705.00px;width:120px;text-align:center;top:209.00px;font-size:10.4px;color:#222;">2026.03.16 10:25:08</div>
<div class="t" style="left:825.00px;width:80px;text-align:center;top:209.00px;font-size:10.4px;color:#222;">00:11:33</div>
<div class="a" style="left:417px;top:243px;width:1092px;height:1px;background:#eeeeee;"></div>
<div class="a" style="left:417px;top:224px;width:1px;height:19px;background:#eeeeee;"></div>
<div class="t" style="left:421px;top:229.00px;font-size:10.4px;color:#222;">Nem elérhető</div>
<div class="t" style="left:585.00px;width:120px;text-align:center;top:229.00px;font-size:10.4px;color:#222;">2026.03.16 10:25:08</div>
<div class="t" style="left:705.00px;width:120px;text-align:center;top:229.00px;font-size:10.4px;color:#222;">2026.03.16 10:37:20</div>
<div class="t" style="left:825.00px;width:80px;text-align:center;top:229.00px;font-size:10.4px;color:#222;">00:12:12</div>
<div class="a" style="left:417px;top:263px;width:1092px;height:1px;background:#eeeeee;"></div>
<div class="a" style="left:417px;top:244px;width:1px;height:19px;background:#eeeeee;"></div>
<div class="t" style="left:421px;top:249.00px;font-size:10.4px;color:#222;">Elérhető</div>
<div class="t" style="left:585.00px;width:120px;text-align:center;top:249.00px;font-size:10.4px;color:#222;">2026.03.16 10:37:20</div>
<div class="t" style="left:705.00px;width:120px;text-align:center;top:249.00px;font-size:10.4px;color:#222;">2026.03.16 11:18:02</div>
<div class="t" style="left:825.00px;width:80px;text-align:center;top:249.00px;font-size:10.4px;color:#222;">00:40:42</div>
<div class="a" style="left:417px;top:283px;width:1092px;height:1px;background:#eeeeee;"></div>
<div class="a" style="left:417px;top:264px;width:1px;height:19px;background:#eeeeee;"></div>
<div class="t" style="left:421px;top:269.00px;font-size:10.4px;color:#222;">Nem elérhető</div>
<div class="t" style="left:585.00px;width:120px;text-align:center;top:269.00px;font-size:10.4px;color:#222;">2026.03.16 11:18:02</div>
<div class="t" style="left:705.00px;width:120px;text-align:center;top:269.00px;font-size:10.4px;color:#222;">2026.03.16 11:18:05</div>
<div class="t" style="left:825.00px;width:80px;text-align:center;top:269.00px;font-size:10.4px;color:#222;">00:00:03</div>
<div class="a" style="left:404px;top:303px;width:1105px;height:1px;background:#eeeeee;"></div>
<div class="a" style="left:404px;top:284px;width:1px;height:19px;background:#eeeeee;"></div>
<svg class="a" style="left:393.7px;top:291.5px" width="8" height="5" viewBox="0 0 8 5"><path d="M0.6 0.6 L4 3.9 L7.4 0.6" fill="none" stroke="#555" stroke-width="1.15"/></svg>
<div class="t" style="left:408px;top:289.00px;font-size:10.4px;font-weight:bold;letter-spacing:0.33px;color:#000;">Belépés a kliensbe</div>
<div class="t" style="left:585.00px;width:120px;text-align:center;top:289.00px;font-size:10.4px;font-weight:bold;letter-spacing:0.33px;color:#000;">2026.03.17 10:12:52</div>
<div class="t" style="left:705.00px;width:120px;text-align:center;top:289.00px;font-size:10.4px;font-weight:bold;letter-spacing:0.33px;color:#000;">2026.03.17 10:25:54</div>
<div class="t" style="left:825.00px;width:80px;text-align:center;top:289.00px;font-size:10.4px;font-weight:bold;letter-spacing:0.33px;color:#000;">00:13:02</div>
<div class="t" style="left:1166.5px;top:289.00px;font-size:10.4px;font-weight:bold;letter-spacing:0.33px;color:#000;">Munkahely 210 teszt mellék</div>
<div class="a" style="left:417px;top:323px;width:1092px;height:1px;background:#eeeeee;"></div>
<div class="a" style="left:417px;top:304px;width:1px;height:19px;background:#eeeeee;"></div>
<div class="t" style="left:421px;top:309.00px;font-size:10.4px;color:#222;">Nem elérhető</div>
<div class="t" style="left:585.00px;width:120px;text-align:center;top:309.00px;font-size:10.4px;color:#222;">2026.03.17 10:12:52</div>
<div class="t" style="left:705.00px;width:120px;text-align:center;top:309.00px;font-size:10.4px;color:#222;">2026.03.17 10:13:35</div>
<div class="t" style="left:825.00px;width:80px;text-align:center;top:309.00px;font-size:10.4px;color:#222;">00:00:43</div>
<div class="a" style="left:417px;top:343px;width:1092px;height:1px;background:#eeeeee;"></div>
<div class="a" style="left:417px;top:324px;width:1px;height:19px;background:#eeeeee;"></div>
<div class="t" style="left:421px;top:329.00px;font-size:10.4px;color:#222;">Interjúban - 1045011</div>
<div class="t" style="left:585.00px;width:120px;text-align:center;top:329.00px;font-size:10.4px;color:#222;">2026.03.17 10:13:35</div>
<div class="t" style="left:705.00px;width:120px;text-align:center;top:329.00px;font-size:10.4px;color:#222;">2026.03.17 10:15:23</div>
<div class="t" style="left:825.00px;width:80px;text-align:center;top:329.00px;font-size:10.4px;color:#222;">00:01:48</div>
<div class="t" style="left:909.7px;top:329.00px;font-size:10.4px;letter-spacing:-0.08px;color:#222;">Bejövő - TTS teszteléshez</div>
<div class="t" style="left:1166.5px;top:329.00px;font-size:10.4px;color:#222;">Visszahívás (Utómunka=00:01:48)</div>
<div class="a" style="left:417px;top:363px;width:1092px;height:1px;background:#eeeeee;"></div>
<div class="a" style="left:417px;top:344px;width:1px;height:19px;background:#eeeeee;"></div>
<div class="t" style="left:421px;top:349.00px;font-size:10.4px;color:#222;">Nem elérhető</div>
<div class="t" style="left:585.00px;width:120px;text-align:center;top:349.00px;font-size:10.4px;color:#222;">2026.03.17 10:15:23</div>
<div class="t" style="left:705.00px;width:120px;text-align:center;top:349.00px;font-size:10.4px;color:#222;">2026.03.17 10:21:21</div>
<div class="t" style="left:825.00px;width:80px;text-align:center;top:349.00px;font-size:10.4px;color:#222;">00:05:58</div>
<div class="a" style="left:417px;top:383px;width:1092px;height:1px;background:#eeeeee;"></div>
<div class="a" style="left:417px;top:364px;width:1px;height:19px;background:#eeeeee;"></div>
<div class="t" style="left:421px;top:369.00px;font-size:10.4px;color:#222;">Elérhető</div>
<div class="t" style="left:585.00px;width:120px;text-align:center;top:369.00px;font-size:10.4px;color:#222;">2026.03.17 10:21:21</div>
<div class="t" style="left:705.00px;width:120px;text-align:center;top:369.00px;font-size:10.4px;color:#222;">2026.03.17 10:21:27</div>
<div class="t" style="left:825.00px;width:80px;text-align:center;top:369.00px;font-size:10.4px;color:#222;">00:00:06</div>
<div class="a" style="left:417px;top:403px;width:1092px;height:1px;background:#eeeeee;"></div>
<div class="a" style="left:417px;top:384px;width:1px;height:19px;background:#eeeeee;"></div>
<div class="t" style="left:421px;top:389.00px;font-size:10.4px;color:#222;">Nem elérhető</div>
<div class="t" style="left:585.00px;width:120px;text-align:center;top:389.00px;font-size:10.4px;color:#222;">2026.03.17 10:21:27</div>
<div class="t" style="left:705.00px;width:120px;text-align:center;top:389.00px;font-size:10.4px;color:#222;">2026.03.17 10:21:30</div>
<div class="t" style="left:825.00px;width:80px;text-align:center;top:389.00px;font-size:10.4px;color:#222;">00:00:03</div>
<div class="a" style="left:417px;top:423px;width:1092px;height:1px;background:#eeeeee;"></div>
<div class="a" style="left:417px;top:404px;width:1px;height:19px;background:#eeeeee;"></div>
<div class="t" style="left:421px;top:409.00px;font-size:10.4px;color:#222;">Elérhető</div>
<div class="t" style="left:585.00px;width:120px;text-align:center;top:409.00px;font-size:10.4px;color:#222;">2026.03.17 10:21:30</div>
<div class="t" style="left:705.00px;width:120px;text-align:center;top:409.00px;font-size:10.4px;color:#222;">2026.03.17 10:25:51</div>
<div class="t" style="left:825.00px;width:80px;text-align:center;top:409.00px;font-size:10.4px;color:#222;">00:04:21</div>
<div class="a" style="left:417px;top:443px;width:1092px;height:1px;background:#eeeeee;"></div>
<div class="a" style="left:417px;top:424px;width:1px;height:19px;background:#eeeeee;"></div>
<div class="t" style="left:421px;top:429.00px;font-size:10.4px;color:#222;">Nem elérhető</div>
<div class="t" style="left:585.00px;width:120px;text-align:center;top:429.00px;font-size:10.4px;color:#222;">2026.03.17 10:25:51</div>
<div class="t" style="left:705.00px;width:120px;text-align:center;top:429.00px;font-size:10.4px;color:#222;">2026.03.17 10:25:54</div>
<div class="t" style="left:825.00px;width:80px;text-align:center;top:429.00px;font-size:10.4px;color:#222;">00:00:03</div>
<div class="a" style="left:404px;top:463px;width:1105px;height:1px;background:#eeeeee;"></div>
<div class="a" style="left:404px;top:444px;width:1px;height:19px;background:#eeeeee;"></div>
<svg class="a" style="left:393.7px;top:451.5px" width="8" height="5" viewBox="0 0 8 5"><path d="M0.6 0.6 L4 3.9 L7.4 0.6" fill="none" stroke="#555" stroke-width="1.15"/></svg>
<div class="t" style="left:408px;top:449.00px;font-size:10.4px;font-weight:bold;letter-spacing:0.33px;color:#000;">Belépés a kliensbe</div>
<div class="t" style="left:585.00px;width:120px;text-align:center;top:449.00px;font-size:10.4px;font-weight:bold;letter-spacing:0.33px;color:#000;">2026.03.17 13:10:33</div>
<div class="t" style="left:705.00px;width:120px;text-align:center;top:449.00px;font-size:10.4px;font-weight:bold;letter-spacing:0.33px;color:#000;">2026.03.17 13:15:11</div>
<div class="t" style="left:825.00px;width:80px;text-align:center;top:449.00px;font-size:10.4px;font-weight:bold;letter-spacing:0.33px;color:#000;">00:04:38</div>
<div class="t" style="left:1166.5px;top:449.00px;font-size:10.4px;font-weight:bold;letter-spacing:0.33px;color:#000;">Munkahely 210 teszt mellék</div>
<div class="a" style="left:417px;top:483px;width:1092px;height:1px;background:#eeeeee;"></div>
<div class="a" style="left:417px;top:464px;width:1px;height:19px;background:#eeeeee;"></div>
<div class="t" style="left:421px;top:469.00px;font-size:10.4px;color:#222;">Nem elérhető</div>
<div class="t" style="left:585.00px;width:120px;text-align:center;top:469.00px;font-size:10.4px;color:#222;">2026.03.17 13:10:33</div>
<div class="t" style="left:705.00px;width:120px;text-align:center;top:469.00px;font-size:10.4px;color:#222;">2026.03.17 13:10:35</div>
<div class="t" style="left:825.00px;width:80px;text-align:center;top:469.00px;font-size:10.4px;color:#222;">00:00:02</div>
<div class="a" style="left:417px;top:503px;width:1092px;height:1px;background:#eeeeee;"></div>
<div class="a" style="left:417px;top:484px;width:1px;height:19px;background:#eeeeee;"></div>
<div class="t" style="left:421px;top:489.00px;font-size:10.4px;color:#222;">Elérhető</div>
<div class="t" style="left:585.00px;width:120px;text-align:center;top:489.00px;font-size:10.4px;color:#222;">2026.03.17 13:10:35</div>
<div class="t" style="left:705.00px;width:120px;text-align:center;top:489.00px;font-size:10.4px;color:#222;">2026.03.17 13:12:58</div>
<div class="t" style="left:825.00px;width:80px;text-align:center;top:489.00px;font-size:10.4px;color:#222;">00:02:23</div>
<div class="a" style="left:417px;top:523px;width:1092px;height:1px;background:#eeeeee;"></div>
<div class="a" style="left:417px;top:504px;width:1px;height:19px;background:#eeeeee;"></div>
<div class="t" style="left:421px;top:509.00px;font-size:10.4px;color:#222;">Szünet</div>
<div class="t" style="left:585.00px;width:120px;text-align:center;top:509.00px;font-size:10.4px;color:#222;">2026.03.17 13:12:58</div>
<div class="t" style="left:705.00px;width:120px;text-align:center;top:509.00px;font-size:10.4px;color:#222;">2026.03.17 13:13:02</div>
<div class="t" style="left:825.00px;width:80px;text-align:center;top:509.00px;font-size:10.4px;color:#222;">00:00:04</div>
<div class="a" style="left:417px;top:543px;width:1092px;height:1px;background:#eeeeee;"></div>
<div class="a" style="left:417px;top:524px;width:1px;height:19px;background:#eeeeee;"></div>
<div class="t" style="left:421px;top:529.00px;font-size:10.4px;color:#222;">Elérhető</div>
<div class="t" style="left:585.00px;width:120px;text-align:center;top:529.00px;font-size:10.4px;color:#222;">2026.03.17 13:13:02</div>
<div class="t" style="left:705.00px;width:120px;text-align:center;top:529.00px;font-size:10.4px;color:#222;">2026.03.17 13:15:09</div>
<div class="t" style="left:825.00px;width:80px;text-align:center;top:529.00px;font-size:10.4px;color:#222;">00:02:07</div>
<div class="a" style="left:417px;top:563px;width:1092px;height:1px;background:#eeeeee;"></div>
<div class="a" style="left:417px;top:544px;width:1px;height:19px;background:#eeeeee;"></div>
<div class="t" style="left:421px;top:549.00px;font-size:10.4px;color:#222;">Nem elérhető</div>
<div class="t" style="left:585.00px;width:120px;text-align:center;top:549.00px;font-size:10.4px;color:#222;">2026.03.17 13:15:09</div>
<div class="t" style="left:705.00px;width:120px;text-align:center;top:549.00px;font-size:10.4px;color:#222;">2026.03.17 13:15:11</div>
<div class="t" style="left:825.00px;width:80px;text-align:center;top:549.00px;font-size:10.4px;color:#222;">00:00:02</div>
<div class="a" style="left:404px;top:583px;width:1105px;height:1px;background:#eeeeee;"></div>
<div class="a" style="left:404px;top:564px;width:1px;height:19px;background:#eeeeee;"></div>
<svg class="a" style="left:393.7px;top:571.5px" width="8" height="5" viewBox="0 0 8 5"><path d="M0.6 0.6 L4 3.9 L7.4 0.6" fill="none" stroke="#555" stroke-width="1.15"/></svg>
<div class="t" style="left:408px;top:569.00px;font-size:10.4px;font-weight:bold;letter-spacing:0.33px;color:#000;">Belépés a kliensbe</div>
<div class="t" style="left:585.00px;width:120px;text-align:center;top:569.00px;font-size:10.4px;font-weight:bold;letter-spacing:0.33px;color:#000;">2026.03.17 13:15:59</div>
<div class="t" style="left:705.00px;width:120px;text-align:center;top:569.00px;font-size:10.4px;font-weight:bold;letter-spacing:0.33px;color:#000;">2026.03.17 14:01:19</div>
<div class="t" style="left:825.00px;width:80px;text-align:center;top:569.00px;font-size:10.4px;font-weight:bold;letter-spacing:0.33px;color:#000;">00:45:20</div>
<div class="t" style="left:1166.5px;top:569.00px;font-size:10.4px;font-weight:bold;letter-spacing:0.33px;color:#000;">Munkahely 210 teszt mellék</div>
<div class="a" style="left:417px;top:603px;width:1092px;height:1px;background:#eeeeee;"></div>
<div class="a" style="left:417px;top:584px;width:1px;height:19px;background:#eeeeee;"></div>
<div class="t" style="left:421px;top:589.00px;font-size:10.4px;color:#222;">Nem elérhető</div>
<div class="t" style="left:585.00px;width:120px;text-align:center;top:589.00px;font-size:10.4px;color:#222;">2026.03.17 13:16:00</div>
<div class="t" style="left:705.00px;width:120px;text-align:center;top:589.00px;font-size:10.4px;color:#222;">2026.03.17 14:01:19</div>
<div class="t" style="left:825.00px;width:80px;text-align:center;top:589.00px;font-size:10.4px;color:#222;">00:45:19</div>
<div class="a" style="left:404px;top:623px;width:1105px;height:1px;background:#eeeeee;"></div>
<div class="a" style="left:404px;top:604px;width:1px;height:19px;background:#eeeeee;"></div>
<svg class="a" style="left:393.7px;top:611.5px" width="8" height="5" viewBox="0 0 8 5"><path d="M0.6 0.6 L4 3.9 L7.4 0.6" fill="none" stroke="#555" stroke-width="1.15"/></svg>
<div class="t" style="left:408px;top:609.00px;font-size:10.4px;font-weight:bold;letter-spacing:0.33px;color:#000;">Belépés a kliensbe</div>
<div class="t" style="left:585.00px;width:120px;text-align:center;top:609.00px;font-size:10.4px;font-weight:bold;letter-spacing:0.33px;color:#000;">2026.03.18 09:41:02</div>
<div class="t" style="left:705.00px;width:120px;text-align:center;top:609.00px;font-size:10.4px;font-weight:bold;letter-spacing:0.33px;color:#000;">2026.03.18 09:42:42</div>
<div class="t" style="left:825.00px;width:80px;text-align:center;top:609.00px;font-size:10.4px;font-weight:bold;letter-spacing:0.33px;color:#000;">00:01:40</div>
<div class="t" style="left:1166.5px;top:609.00px;font-size:10.4px;font-weight:bold;letter-spacing:0.33px;color:#000;">Munkahely 290</div>
<div class="a" style="left:378px;top:643px;width:1131px;height:1px;background:#eeeeee;"></div>
<div class="a" style="left:417px;top:624px;width:1px;height:19px;background:#eeeeee;"></div>
<div class="t" style="left:421px;top:629.00px;font-size:10.4px;color:#222;">Nem elérhető</div>
<div class="t" style="left:585.00px;width:120px;text-align:center;top:629.00px;font-size:10.4px;color:#222;">2026.03.18 09:41:02</div>
<div class="t" style="left:705.00px;width:120px;text-align:center;top:629.00px;font-size:10.4px;color:#222;">2026.03.18 09:42:42</div>
<div class="t" style="left:825.00px;width:80px;text-align:center;top:629.00px;font-size:10.4px;color:#222;">00:01:40</div>
<div class="t" style="left:378.8px;top:773.00px;font-size:10.4px;letter-spacing:-0.45px;color:#333;">Elemszám: 1</div>
</body></html>
